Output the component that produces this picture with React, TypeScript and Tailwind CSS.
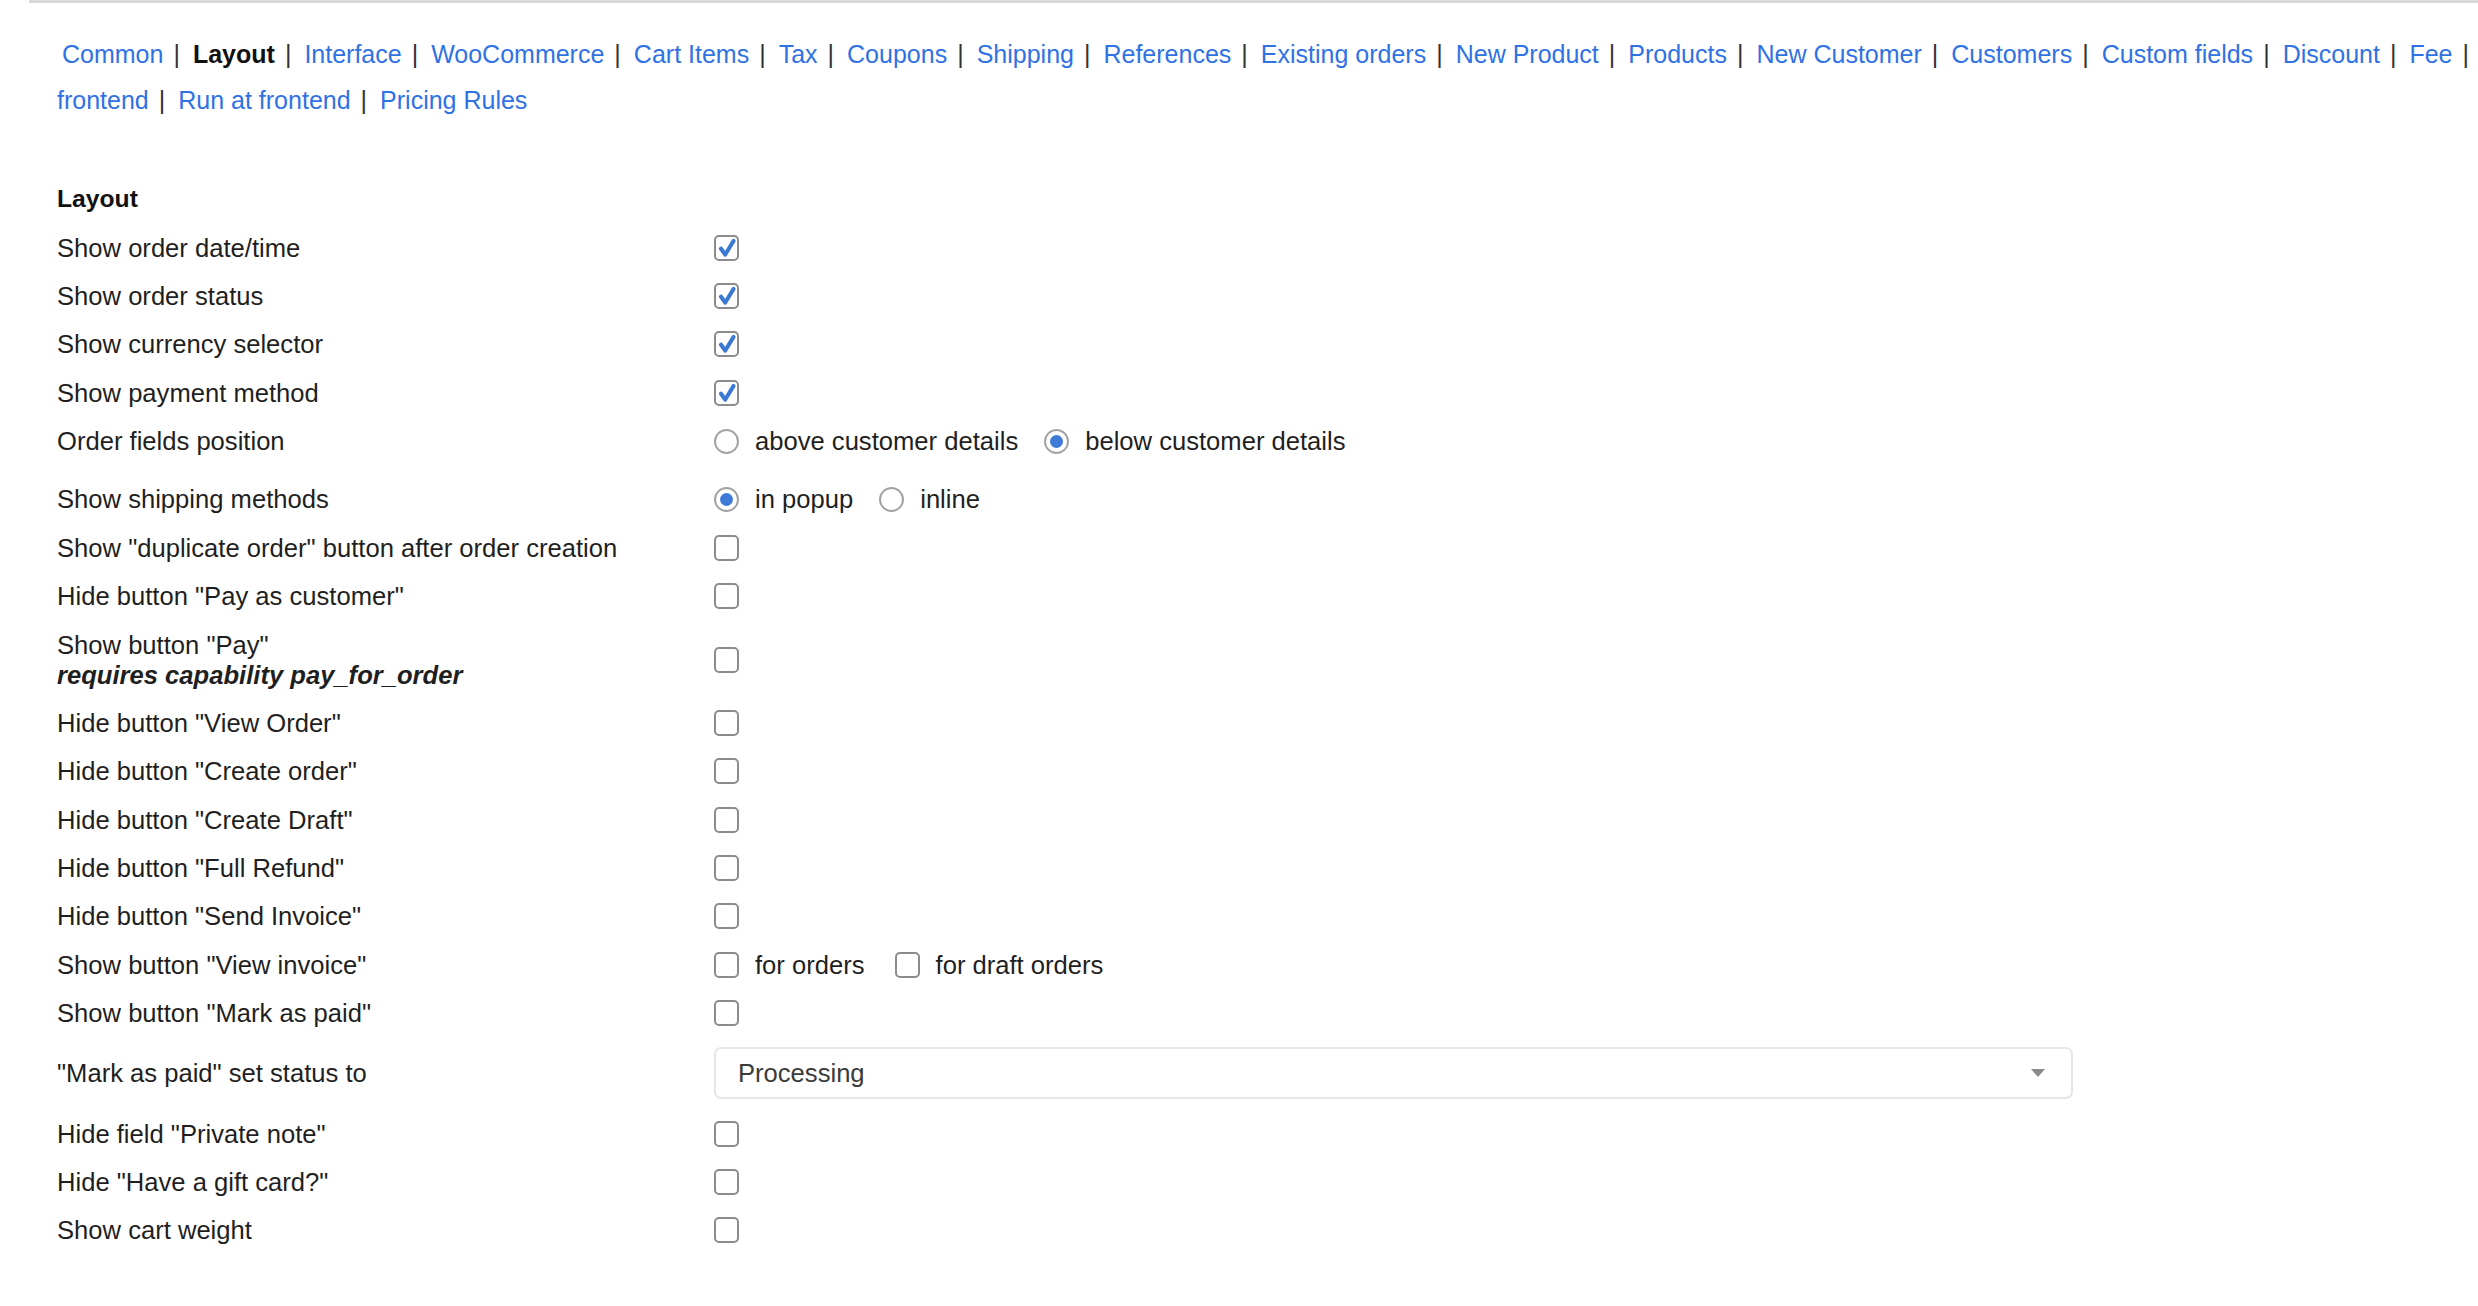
import React from "react";

type NavItem = { label: string; active?: boolean };

const navLines: NavItem[][] = [
  [
    { label: "Common" },
    { label: "Layout", active: true },
    { label: "Interface" },
    { label: "WooCommerce" },
    { label: "Cart Items" },
    { label: "Tax" },
    { label: "Coupons" },
    { label: "Shipping" },
    { label: "References" },
    { label: "Existing orders" },
    { label: "New Product" },
    { label: "Products" },
    { label: "New Customer" },
    { label: "Customers" },
    { label: "Custom fields" },
    { label: "Discount" },
    { label: "Fee" },
  ],
  [{ label: "frontend" }, { label: "Run at frontend" }, { label: "Pricing Rules" }],
];

type Row =
  | { kind: "check"; label: string; checked?: boolean; note?: string }
  | { kind: "radio"; label: string; options: { text: string; on: boolean }[]; spaced?: boolean }
  | { kind: "multi"; label: string; options: string[] }
  | { kind: "select"; label: string; value: string };

const rows: Row[] = [
  { kind: "check", label: "Show order date/time", checked: true },
  { kind: "check", label: "Show order status", checked: true },
  { kind: "check", label: "Show currency selector", checked: true },
  { kind: "check", label: "Show payment method", checked: true },
  {
    kind: "radio",
    label: "Order fields position",
    options: [
      { text: "above customer details", on: false },
      { text: "below customer details", on: true },
    ],
    spaced: true,
  },
  {
    kind: "radio",
    label: "Show shipping methods",
    options: [
      { text: "in popup", on: true },
      { text: "inline", on: false },
    ],
  },
  { kind: "check", label: 'Show "duplicate order" button after order creation' },
  { kind: "check", label: 'Hide button "Pay as customer"' },
  { kind: "check", label: 'Show button "Pay"', note: "requires capability pay_for_order" },
  { kind: "check", label: 'Hide button "View Order"' },
  { kind: "check", label: 'Hide button "Create order"' },
  { kind: "check", label: 'Hide button "Create Draft"' },
  { kind: "check", label: 'Hide button "Full Refund"' },
  { kind: "check", label: 'Hide button "Send Invoice"' },
  { kind: "multi", label: 'Show button "View invoice"', options: ["for orders", "for draft orders"] },
  { kind: "check", label: 'Show button "Mark as paid"' },
  { kind: "select", label: '"Mark as paid" set status to', value: "Processing" },
  { kind: "check", label: 'Hide field "Private note"' },
  { kind: "check", label: 'Hide "Have a gift card?"' },
  { kind: "check", label: "Show cart weight" },
];

function Checkbox({ checked }: { checked?: boolean }) {
  return (
    <span className="flex h-[26px] w-[25px] shrink-0 items-center justify-center rounded-[5px] border-2 border-[#8c8c8c] bg-white">
      {checked && (
        <svg width="20" height="20" viewBox="0 0 16 16">
          <path d="M3.2 8.6 L6.6 13.2 L13.2 2.4" fill="none" stroke="#3a79d3" strokeWidth="3.3" strokeLinecap="round" strokeLinejoin="round" />
        </svg>
      )}
    </span>
  );
}

function Radio({ on }: { on: boolean }) {
  return (
    <span className="flex h-[25px] w-[25px] shrink-0 items-center justify-center rounded-full border-2 border-[#a3a3a3] bg-white">
      {on && <span className="h-[13px] w-[13px] rounded-full bg-[#3d7bd6]" />}
    </span>
  );
}

function Control({ row }: { row: Row }) {
  if (row.kind === "check") return <Checkbox checked={row.checked} />;
  if (row.kind === "radio") {
    return (
      <div className="flex items-center gap-[26px]">
        {row.options.map((o) => (
          <label key={o.text} className="flex items-center gap-[16px]">
            <Radio on={o.on} />
            <span>{o.text}</span>
          </label>
        ))}
      </div>
    );
  }
  if (row.kind === "multi") {
    return (
      <div className="flex items-center gap-[30px]">
        {row.options.map((o) => (
          <label key={o} className="flex items-center gap-[16px]">
            <Checkbox />
            <span>{o}</span>
          </label>
        ))}
      </div>
    );
  }
  return (
    <div className="flex h-[52px] w-[1359px] items-center justify-between rounded-[7px] border-2 border-[#e6e6e6] bg-white pl-[22px] pr-[26px] text-[#3b3b3b]">
      <span>{row.value}</span>
      <svg width="14" height="8" viewBox="0 0 14 8">
        <path d="M0 0 H14 L7 8 Z" fill="#8a8a8a" />
      </svg>
    </div>
  );
}

export default function App() {
  return (
    <div
      className="min-h-[1306px] overflow-hidden bg-white text-[#1f1f1f]"
      style={{ fontFamily: '"Liberation Sans", Arial, sans-serif' }}
    >
      <div className="ml-[29px] h-[3px] bg-[#d9d9d9]" />

      <nav className="pt-[28px] pl-[57px] text-[25px] leading-[46px] whitespace-nowrap">
        {navLines.map((line, li) => (
          <div key={li} className={li === 0 ? "flex pl-[5px]" : "flex"}>
            {line.map((item, i) => (
              <span key={item.label} className="flex shrink-0">
                {item.active ? (
                  <span className="font-bold text-[#111]">{item.label}</span>
                ) : (
                  <a className="text-[#2f72e4]">{item.label}</a>
                )}
                {(li === 0 || i < line.length - 1) && (
                  <span className="ml-[10px] mr-[13px] text-[#333]">|</span>
                )}
              </span>
            ))}
          </div>
        ))}
      </nav>

      <section className="mt-[52px] pl-[57px] text-[25.6px] leading-[30px]">
        <h3 className="py-[9.2px] text-[24.7px] font-bold text-[#111]">Layout</h3>
        {rows.map((row) => (
          <div
            key={row.label}
            className={`grid grid-cols-[657px_1fr] items-center ${row.kind === "select" ? "py-[10px]" : "py-[9.2px]"} ${row.kind === "radio" && row.spaced ? "mb-[10px]" : ""}`}
          >
            <div>
              <div>{row.label}</div>
              {row.kind === "check" && row.note && <div className="font-bold italic">{row.note}</div>}
            </div>
            <div className="flex items-center">
              <Control row={row} />
            </div>
          </div>
        ))}
      </section>
    </div>
  );
}
